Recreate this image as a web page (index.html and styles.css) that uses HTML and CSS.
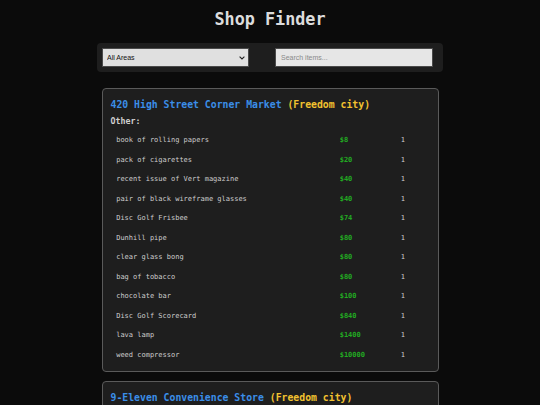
FILE: index.html
```html
<!DOCTYPE html>
<html>
<head>
<meta charset="utf-8">
<link rel="stylesheet" href="styles.css">
</head>
<body>
<div class="page">
  <h1 class="title">Shop Finder</h1>
  <div class="filters">
    <div class="area-wrap">
      <select class="area"><option>All Areas</option></select>
      <svg class="arrow" width="6" height="4" viewBox="0 0 6 4"><path d="M0.6 0.6 L3 3 L5.4 0.6" fill="none" stroke="#222" stroke-width="1.1"/></svg>
    </div>
    <input class="search" type="text" placeholder="Search items...">
  </div>
  <div class="card">
    <h2 class="shop"><span class="shop-name">420 High Street Corner Market</span> <span class="city">(Freedom city)</span></h2>
    <div class="cat">Other:</div>
    <div class="rows">
      <div class="row"><span class="name">book of rolling papers</span><span class="price">$8</span><span class="qty">1</span></div>
      <div class="row"><span class="name">pack of cigarettes</span><span class="price">$20</span><span class="qty">1</span></div>
      <div class="row"><span class="name">recent issue of Vert magazine</span><span class="price">$40</span><span class="qty">1</span></div>
      <div class="row"><span class="name">pair of black wireframe glasses</span><span class="price">$40</span><span class="qty">1</span></div>
      <div class="row"><span class="name">Disc Golf Frisbee</span><span class="price">$74</span><span class="qty">1</span></div>
      <div class="row"><span class="name">Dunhill pipe</span><span class="price">$80</span><span class="qty">1</span></div>
      <div class="row"><span class="name">clear glass bong</span><span class="price">$80</span><span class="qty">1</span></div>
      <div class="row"><span class="name">bag of tobacco</span><span class="price">$80</span><span class="qty">1</span></div>
      <div class="row"><span class="name">chocolate bar</span><span class="price">$100</span><span class="qty">1</span></div>
      <div class="row"><span class="name">Disc Golf Scorecard</span><span class="price">$840</span><span class="qty">1</span></div>
      <div class="row"><span class="name">lava lamp</span><span class="price">$1400</span><span class="qty">1</span></div>
      <div class="row"><span class="name">weed compressor</span><span class="price">$10000</span><span class="qty">1</span></div>
    </div>
  </div>
  <div class="card">
    <h2 class="shop"><span class="shop-name">9-Eleven Convenience Store</span> <span class="city">(Freedom city)</span></h2>
    <div class="cat">Other:</div>
  </div>
</div>
</body>
</html>
```
FILE: styles.css
```css
html, body {
  margin: 0;
  padding: 0;
  background: #0b0b0b;
  height: 405px;
  overflow: hidden;
}
body {
  font-family: "DejaVu Sans Mono", "Liberation Mono", monospace;
  color: #cfcfcf;
}
.page {
  width: 346px;
  margin: 0 auto;
  padding-top: 9px;
}
.title {
  margin: 0;
  text-align: center;
  font-size: 16.8px;
  line-height: 20px;
  font-weight: bold;
  color: #dcdcdc;
}
.filters {
  margin-top: 14px;
  height: 29px;
  box-sizing: border-box;
  background: #1e1e1e;
  border-radius: 4px;
  display: flex;
  align-items: center;
  padding: 0 9px 0 5px;
  gap: 26px;
}
.area-wrap {
  position: relative;
  width: 147px;
  height: 19px;
}
.area {
  display: block;
  appearance: none;
  -webkit-appearance: none;
  width: 147px;
  height: 19px;
  margin: 0;
  box-sizing: border-box;
  background: #e0e0e0;
  border: 1px solid #4a4a4a;
  border-radius: 0;
  font-family: "Liberation Sans", Arial, sans-serif;
  font-size: 7px;
  color: #111;
  padding: 0 4px;
  outline: none;
}
.arrow {
  position: absolute;
  right: 4px;
  top: 8px;
  pointer-events: none;
}
.search {
  display: block;
  margin: 0;
  width: 158px;
  height: 19px;
  box-sizing: border-box;
  background: #e6e6e6;
  border: 1px solid #4a4a4a;
  font-family: "Liberation Sans", Arial, sans-serif;
  font-size: 7px;
  padding: 0 5px;
  outline: none;
}
.search::placeholder {
  color: #8a8a8a;
}
.card {
  margin: 16px 4.5px 0;
  background: #1e1e1e;
  border: 1px solid #5a5a5a;
  border-radius: 4px;
  padding: 10px 8px 7px;
}
.card + .card {
  margin-top: 9px;
}
.shop {
  margin: 0;
  font-size: 9.8px;
  line-height: 12px;
  font-weight: bold;
}
.shop-name {
  color: #3b8ee8;
}
.city {
  color: #f2c230;
}
.cat {
  margin-top: 4.7px;
  font-size: 8.3px;
  line-height: 10px;
  font-weight: bold;
  color: #d0d0d0;
}
.rows {
  margin-top: 4.8px;
}
.row {
  display: grid;
  grid-template-columns: 223.5px 61px 1fr;
  height: 19.5px;
  align-items: center;
  padding-left: 5.7px;
  font-size: 7px;
  color: #cdcdcd;
}
.price {
  color: #22aa22;
  font-weight: bold;
}
```
